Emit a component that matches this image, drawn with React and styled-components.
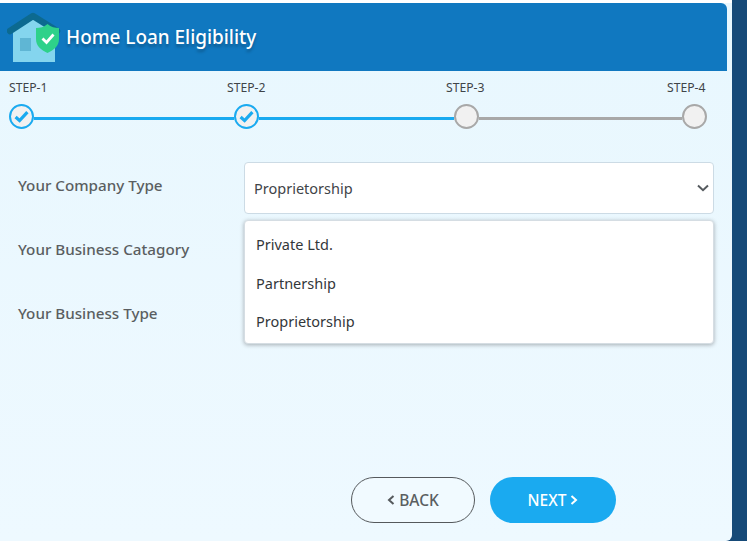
import React from 'react';
import styled, { createGlobalStyle } from 'styled-components';

const GlobalStyle = createGlobalStyle`
  html, body {
    margin: 0;
    padding: 0;
    background: #ffffff;
    overflow: hidden;
  }
  * {
    box-sizing: border-box;
  }
`;

const Page = styled.div`
  font-family: 'Noto Sans', sans-serif;
  width: 747px;
  height: 541px;
  overflow: hidden;
  background: #164a78;
  display: flex;
  align-items: flex-start;
`;

const Card = styled.div`
  width: 732px;
  height: 538px;
  flex-shrink: 0;
  background: linear-gradient(#e8f7fe, #eef9ff);
  border-radius: 0 0 6px 0;
  box-shadow: 0 -3px 0 #ffffff;
  margin-top: 3px;
  display: flex;
  flex-direction: column;
`;

const Header = styled.header`
  width: 727px;
  height: 68px;
  flex-shrink: 0;
  background: #1078c0;
  border-radius: 0 6px 0 0;
  display: flex;
  align-items: center;
  gap: 3px;
  padding: 0 0 0 7px;
`;

const Title = styled.h1`
  margin: 0;
  font-size: 18.9px;
  font-weight: 500;
  color: #ffffff;
  text-shadow: 0 3px 3px rgba(0, 0, 0, 0.25);
`;

const Stepper = styled.div`
  width: 727px;
  padding: 10px 20px 0 9px;
`;

const StepLabels = styled.div`
  display: grid;
  grid-template-columns: 218px 219px 221px auto;
  font-size: 12.2px;
  line-height: 14px;
  color: #3f4448;
`;

const StepTrack = styled.div`
  display: flex;
  align-items: center;
  margin-top: 9px;
`;

const StepDot = styled.div`
  width: 25px;
  height: 25px;
  flex-shrink: 0;
  border-radius: 50%;
  background: #f1f1f1;
  border: 2px solid ${({ done }) => (done ? '#1aaaf0' : '#a8a8a8')};
  display: flex;
  align-items: center;
  justify-content: center;
`;

const StepLine = styled.div`
  width: ${({ length }) => length}px;
  flex-shrink: 0;
  height: 3px;
  margin-top: 3px;
  background: ${({ done }) => (done ? '#1aaaf0' : '#a8a8a8')};
`;

const Form = styled.div`
  position: relative;
  width: 727px;
  padding: 33px 13px 0 18px;
`;

const Row = styled.div`
  display: flex;
  align-items: flex-start;
  height: 64px;
`;

const Label = styled.label`
  width: 226px;
  padding-top: 13px;
  font-size: 15.2px;
  line-height: 20px;
  font-weight: 500;
  color: #5a5e61;
`;

const Select = styled.div`
  width: 470px;
  height: 52px;
  background: #ffffff;
  border: 1px solid #ccdbe5;
  border-radius: 4px;
  display: flex;
  align-items: center;
  justify-content: space-between;
  padding: 0 4px 0 9px;
  font-size: 14.5px;
  color: #3f4448;
`;

const Dropdown = styled.ul`
  position: absolute;
  left: 244px;
  top: 91px;
  width: 470px;
  height: 124px;
  margin: 0;
  padding: 4px 0 0 11px;
  list-style: none;
  background: #ffffff;
  border: 1px solid #d5dde3;
  border-radius: 4px;
  box-shadow: 0 1px 4px rgba(0, 0, 0, 0.3);
`;

const Option = styled.li`
  height: 38.4px;
  display: flex;
  align-items: center;
  font-size: 14.5px;
  color: #33373a;
`;

const Actions = styled.div`
  width: 727px;
  display: flex;
  gap: 15px;
  padding-left: 351px;
  margin-top: 123px;
`;

const Button = styled.button`
  width: ${({ primary }) => (primary ? '126px' : '124px')};
  height: 46px;
  border-radius: 23px;
  font-family: inherit;
  font-size: 15.5px;
  font-weight: 500;
  color: ${({ primary }) => (primary ? '#ffffff' : '#5a5e61')};
  background: ${({ primary }) => (primary ? '#1aaaf0' : '#f1faff')};
  border: ${({ primary }) => (primary ? 'none' : '1px solid #55595c')};
  display: flex;
  align-items: center;
  justify-content: center;
  gap: 4px;
`;

const Check = () => (
  <svg width="15" height="13" viewBox="0 0 15 13" fill="none">
    <path d="M1.6 7 L5.6 10.6 L13.4 2.2" stroke="#1aaaf0" strokeWidth="3.2" />
  </svg>
);

const Chevron = ({ dir, color }) => (
  <svg width="8" height="12" viewBox="0 0 8 12" fill="none">
    <path
      d={dir === 'left' ? 'M6.5 2 L2 6 L6.5 10' : 'M1.5 2 L6 6 L1.5 10'}
      stroke={color}
      strokeWidth="2"
    />
  </svg>
);

const SelectArrow = () => (
  <svg width="12" height="8" viewBox="0 0 12 8" fill="none">
    <path d="M1 1.5 L6 6.2 L11 1.5" stroke="#555a5e" strokeWidth="2" />
  </svg>
);

const HouseLogo = () => (
  <svg width="56" height="50" viewBox="0 0 56 50">
    <path d="M6 50 L6 20 L26 5 L48 20 L48 50 Z" fill="#84d5ee" />
    <rect x="13" y="26" width="11" height="13" fill="#5fb6d4" />
    <path d="M3 19 L26 4 L50 19" fill="none" stroke="#0c6a90" strokeWidth="6.5" strokeLinecap="round" strokeLinejoin="round" />
    <path d="M40.5 12 C37 15 33 16 29 16 L29 27 C29 34 34 38 40.5 41 C47 38 52 34 52 27 L52 16 C48 16 44 15 40.5 12 Z" fill="#2ed18a" />
    <path d="M35.5 26.5 L39.5 30.5 L46.5 22.5" fill="none" stroke="#ffffff" strokeWidth="2.8" />
  </svg>
);

const steps = ['STEP-1', 'STEP-2', 'STEP-3', 'STEP-4'];
const options = ['Private Ltd.', 'Partnership', 'Proprietorship'];

export default function App() {
  return (
    <>
      <GlobalStyle />
      <Page>
        <Card>
          <Header>
            <HouseLogo />
            <Title>Home Loan Eligibility</Title>
          </Header>
          <Stepper>
            <StepLabels>
              {steps.map((s) => (
                <span key={s}>{s}</span>
              ))}
            </StepLabels>
            <StepTrack>
              <StepDot done><Check /></StepDot>
              <StepLine done length={200} />
              <StepDot done><Check /></StepDot>
              <StepLine done length={195} />
              <StepDot />
              <StepLine length={203} />
              <StepDot />
            </StepTrack>
          </Stepper>
          <Form>
            <Row>
              <Label>Your Company Type</Label>
              <Select>
                Proprietorship
                <SelectArrow />
              </Select>
            </Row>
            <Row>
              <Label>Your Business Catagory</Label>
            </Row>
            <Row>
              <Label>Your Business Type</Label>
            </Row>
            <Dropdown>
              {options.map((o) => (
                <Option key={o}>{o}</Option>
              ))}
            </Dropdown>
          </Form>
          <Actions>
            <Button>
              <Chevron dir="left" color="#55595c" />
              BACK
            </Button>
            <Button primary>
              NEXT
              <Chevron dir="right" color="#ffffff" />
            </Button>
          </Actions>
        </Card>
      </Page>
    </>
  );
}
